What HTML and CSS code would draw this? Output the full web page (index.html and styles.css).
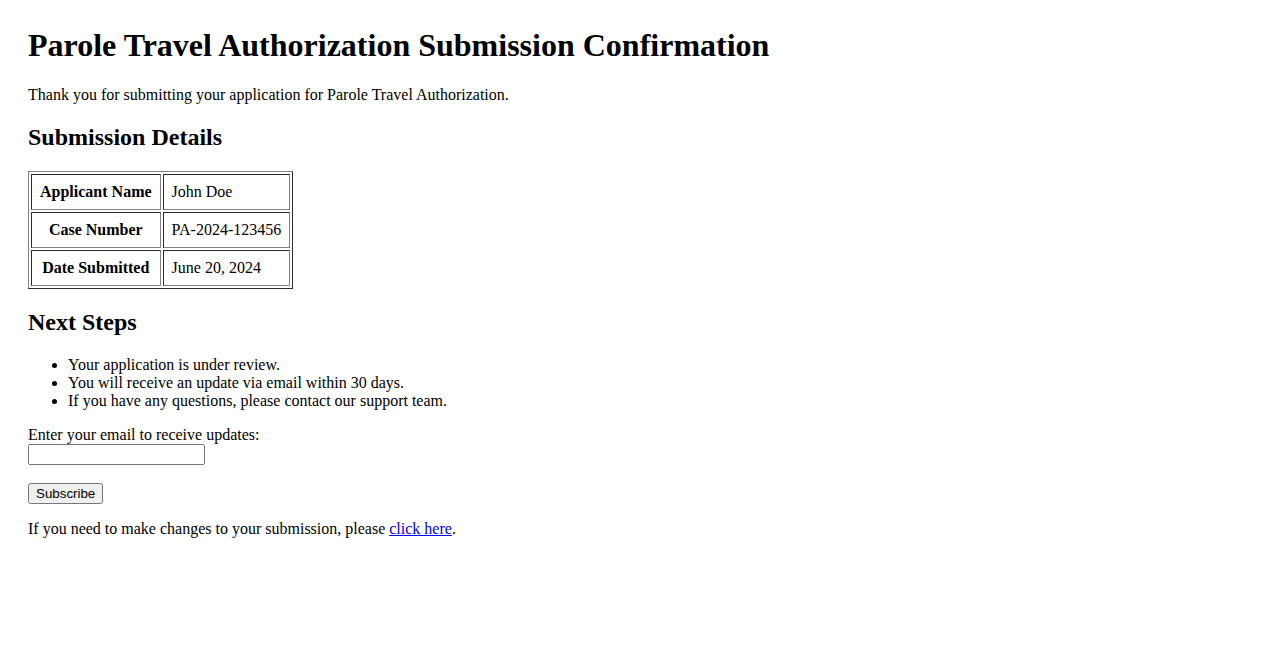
FILE: index.html
```html
<!DOCTYPE html>
<html>
<head>
<meta charset="utf-8">
<title>Parole Travel Authorization Submission Confirmation</title>
<link rel="stylesheet" href="styles.css">
</head>
<body class="page">
<h1>Parole Travel Authorization Submission Confirmation</h1>
<p>Thank you for submitting your application for Parole Travel Authorization.</p>
<h2>Submission Details</h2>
<table class="details" border="1">
<tr><th>Applicant Name</th><td>John Doe</td></tr>
<tr><th>Case Number</th><td>PA-2024-123456</td></tr>
<tr><th>Date Submitted</th><td>June 20, 2024</td></tr>
</table>
<h2>Next Steps</h2>
<ul>
<li>Your application is under review.</li>
<li>You will receive an update via email within 30 days.</li>
<li>If you have any questions, please contact our support team.</li>
</ul>
<form class="subscribe">
<label for="email">Enter your email to receive updates:</label><br>
<input class="email-input" type="email" id="email" name="email"><br><br>
<button type="button">Subscribe</button>
</form>
<p>If you need to make changes to your submission, please <a href="#">click here</a>.</p>
</body>
</html>
```
FILE: styles.css
```css
.page {
  margin: 0;
  padding: 6px 28px 20px;
  font-family: "Liberation Serif", "Times New Roman", serif;
  font-size: 16px;
  color: #000;
  background: #fff;
}
.details th,
.details td {
  padding: 8px;
}
.details td {
  text-align: left;
}
.email-input {
  box-sizing: border-box;
  width: 177px;
}
```
